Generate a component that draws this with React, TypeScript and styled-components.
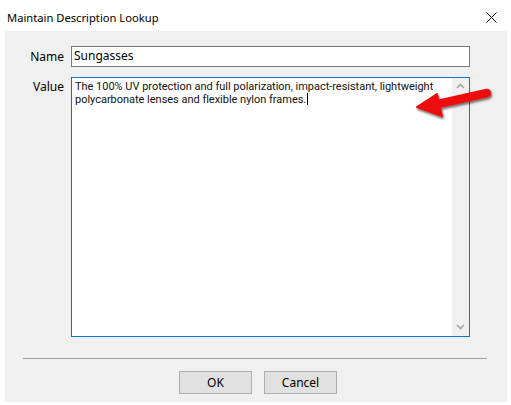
import React from "react";
import styled, { createGlobalStyle } from "styled-components";

const GlobalStyle = createGlobalStyle`
  html, body {
    margin: 0;
    padding: 0;
    background: #ffffff;
  }
  body {
    font-family: "Segoe UI", "Noto Sans", sans-serif;
    font-size: 12px;
    color: #000000;
  }
`;

const Window = styled.div`
  position: relative;
  width: 511px;
  height: 405px;
  background: #ffffff;
  display: flex;
  flex-direction: column;
`;

const TitleBar = styled.div`
  height: 31px;
  display: flex;
  align-items: center;
  justify-content: space-between;
  padding: 4px 14px 0 7px;
  box-sizing: border-box;
`;

const Title = styled.span`
  font-size: 11.2px;
  color: #000000;
`;

const CloseButton = styled.span`
  display: flex;
  width: 11px;
  height: 11px;
`;

const Client = styled.div`
  margin: 0 4px 0 5px;
  height: 371px;
  background: #f0f0f0;
  display: flex;
  flex-direction: column;
  padding-top: 15px;
  box-sizing: border-box;
`;

const Form = styled.div`
  display: grid;
  grid-template-columns: 59px 399px;
  column-gap: 7px;
  row-gap: 10px;
`;

const Label = styled.label<{ $top: number }>`
  text-align: right;
  padding-top: ${(p) => p.$top}px;
  line-height: 14px;
`;

const TextInput = styled.div`
  height: 21px;
  box-sizing: border-box;
  border: 1px solid #7a7a7a;
  background: #ffffff;
  padding: 2px 0 0 2px;
  line-height: 14px;
`;

const MemoBox = styled.div`
  height: 260px;
  box-sizing: border-box;
  border: 1px solid #0078d7;
  background: #ffffff;
  display: flex;
`;

const MemoText = styled.div`
  flex: 1;
  padding: 2px 2px 0 3px;
  font-family: Roboto, "Noto Sans", sans-serif;
  font-size: 11px;
  line-height: 13px;
  letter-spacing: -0.02px;
  white-space: nowrap;
  color: #111111;
`;

const MemoLine = styled.div`
  height: 13px;
`;

const Caret = styled.span`
  display: inline-block;
  width: 1px;
  height: 12px;
  background: #000000;
  vertical-align: -2px;
  margin-left: 1px;
`;

const ScrollTrack = styled.div`
  width: 17px;
  background: #f0f0f0;
  display: flex;
  flex-direction: column;
  justify-content: space-between;
  align-items: center;
  padding: 5px 0 6px;
  box-sizing: border-box;
`;

const Separator = styled.div`
  margin: 21px 0 0 18px;
  width: 464px;
  height: 1px;
  background: #a0a0a0;
`;

const ButtonRow = styled.div`
  display: flex;
  gap: 12px;
  padding: 12px 0 0 174px;
`;

const Button = styled.button`
  width: 73px;
  height: 23px;
  box-sizing: border-box;
  border: 1px solid #adadad;
  background: #e1e1e1;
  font-family: inherit;
  font-size: 12px;
  color: #000000;
  padding: 0;
`;

const Pointer = styled.svg`
  position: absolute;
  left: 410px;
  top: 82px;
`;

const Chevron = ({ up }: { up?: boolean }) => (
  <svg width="9" height="6" viewBox="0 0 9 6">
    <path
      d={up ? "M1 5 L4.5 1.5 L8 5" : "M1 1 L4.5 4.5 L8 1"}
      fill="none"
      stroke="#a6a6a6"
      strokeWidth="1.6"
    />
  </svg>
);

export default function App() {
  return (
    <>
      <GlobalStyle />
      <Window>
        <TitleBar>
          <Title>Maintain Description Lookup</Title>
          <CloseButton>
            <svg width="11" height="11" viewBox="0 0 11 11">
              <path d="M0.5 0.5 L10.5 10.5 M10.5 0.5 L0.5 10.5" stroke="#000" strokeWidth="1" />
            </svg>
          </CloseButton>
        </TitleBar>
        <Client>
          <Form>
            <Label $top={4}>Name</Label>
            <TextInput>Sungasses</TextInput>
            <Label $top={3}>Value</Label>
            <MemoBox>
              <MemoText>
                <MemoLine>
                  The 100% UV protection and full polarization, impact-resistant, lightweight
                </MemoLine>
                <MemoLine>
                  polycarbonate lenses and flexible nylon frames.
                  <Caret />
                </MemoLine>
              </MemoText>
              <ScrollTrack>
                <Chevron up />
                <Chevron />
              </ScrollTrack>
            </MemoBox>
          </Form>
          <Separator />
          <ButtonRow>
            <Button>OK</Button>
            <Button>Cancel</Button>
          </ButtonRow>
        </Client>
        <Pointer width="90" height="44" viewBox="0 0 90 44">
          <defs>
            <filter id="drop" x="-20%" y="-30%" width="140%" height="170%">
              <feDropShadow dx="1" dy="2" stdDeviation="1.2" floodColor="#000" floodOpacity="0.55" />
            </filter>
          </defs>
          <g filter="url(#drop)">
            <path d="M77 11 L28 22" stroke="#ee1111" strokeWidth="8.5" strokeLinecap="round" fill="none" />
            <path d="M7 25 L27 12 L32 34 Z" fill="#ee1111" stroke="#ee1111" strokeWidth="2" strokeLinejoin="round" />
          </g>
        </Pointer>
      </Window>
    </>
  );
}
